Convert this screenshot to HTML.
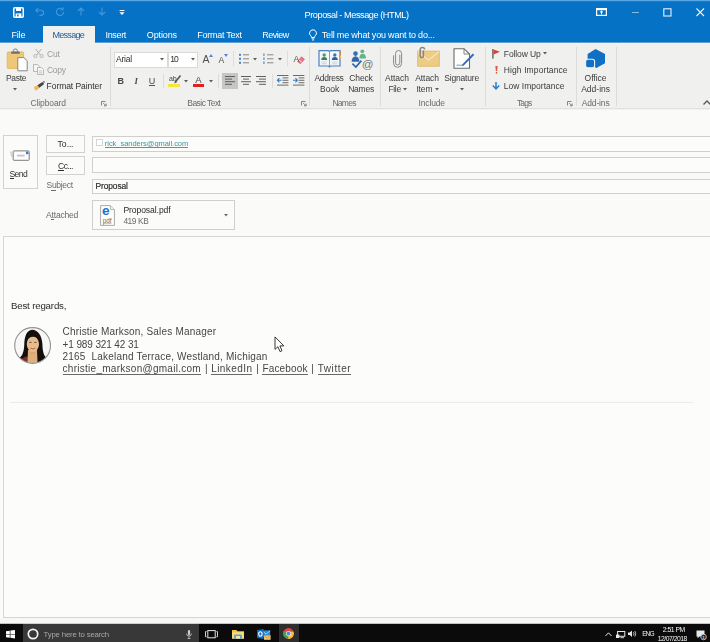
<!DOCTYPE html>
<html lang="en"><head><meta charset="utf-8"><title>Proposal - Message (HTML)</title>
<style>
html,body{margin:0;padding:0;background:#fbfcfa;}
#root{position:relative;width:710px;height:642px;overflow:hidden;background:#fbfcfa;font-family:"Liberation Sans",sans-serif;}
#layer{position:absolute;left:0;top:0;width:710px;height:642px;will-change:transform;}
.t{position:absolute;white-space:pre;line-height:1;}
.b{position:absolute;box-sizing:border-box;overflow:visible;}
u{text-decoration:underline;}
</style></head>
<body><div id="root">
<div class="b" style="left:0px;top:0px;width:710px;height:43px;background:#0672c6;"></div>
<div class="b" style="left:0px;top:0px;width:710px;height:1px;background:#57a6e6;"></div>
<div class="b" style="left:0px;top:1px;width:710px;height:1px;background:#1a7ccd;"></div>
<div class="b" style="left:0px;top:42px;width:710px;height:1px;background:#5c9fd8;"></div>
<div class="b" style="left:43px;top:26px;width:52px;height:18px;background:#f0f1ef;"></div>
<svg class="b" style="left:13px;top:7px" width="11" height="11" viewBox="0 0 11 11"><rect x="0.75" y="0.75" width="9.5" height="9.5" rx="1" fill="none" stroke="#fff" stroke-width="1.5"/><rect x="3" y="1" width="5" height="3" fill="#fff"/><rect x="2.6" y="6.4" width="5.8" height="3.6" fill="#fff"/><rect x="4.2" y="7.4" width="1.4" height="2" fill="#0672c6"/></svg>
<svg class="b" style="left:35px;top:7px" width="10" height="9" viewBox="0 0 10 9"><path d="M1 3.2 H6 a2.6 2.6 0 0 1 0 5.2 H4.5" fill="none" stroke="#4497dc" stroke-width="1.1"/><path d="M3.2 0.8 L0.8 3.2 L3.2 5.6" fill="none" stroke="#4497dc" stroke-width="1.1"/></svg>
<svg class="b" style="left:55px;top:7px" width="10" height="9" viewBox="0 0 10 9"><path d="M7.6 2.4 A3.6 3.6 0 1 0 8.6 5" fill="none" stroke="#4497dc" stroke-width="1.1"/><path d="M5.4 2.8 H8.2 V0.2" fill="none" stroke="#4497dc" stroke-width="1"/></svg>
<svg class="b" style="left:77px;top:7px" width="8" height="9" viewBox="0 0 8 9"><path d="M4 1 V8.5 M1 4 L4 1 L7 4" fill="none" stroke="#4497dc" stroke-width="1.1"/></svg>
<svg class="b" style="left:98px;top:7px" width="8" height="9" viewBox="0 0 8 9"><path d="M4 0.5 V8 M1 5 L4 8 L7 5" fill="none" stroke="#4497dc" stroke-width="1.1"/></svg>
<svg class="b" style="left:119px;top:9.5px" width="6" height="6" viewBox="0 0 6 6"><rect x="0.6" y="0" width="4.8" height="1" fill="#fff"/><path d="M0.4 2.2 H5.6 L3 5 Z" fill="#fff"/></svg>
<svg class="b" style="left:596px;top:8px" width="11" height="8" viewBox="0 0 11 8"><rect x="0.6" y="0.6" width="9.8" height="6.8" fill="none" stroke="#fff" stroke-width="1.2"/><rect x="0.6" y="0.6" width="9.8" height="1.6" fill="#fff"/><path d="M5.5 3 V6.4 M4 4.4 L5.5 3 L7 4.4" stroke="#fff" stroke-width="1" fill="none"/></svg>
<div class="b" style="left:631.5px;top:11.5px;width:7px;height:1px;background:#86bde8;"></div>
<svg class="b" style="left:663px;top:7.5px" width="9" height="9" viewBox="0 0 9 9"><rect x="0.8" y="0.8" width="7.2" height="7.2" fill="none" stroke="#e8f2fb" stroke-width="1.1"/></svg>
<svg class="b" style="left:696px;top:8px" width="9" height="9" viewBox="0 0 9 9"><path d="M0.5 0.5 L8 8 M8 0.5 L0.5 8" stroke="#e8f2fb" stroke-width="1.1" fill="none"/></svg>
<svg class="b" style="left:308px;top:29px" width="10" height="12" viewBox="0 0 10 12"><path d="M5 0.8 a3.4 3.4 0 0 1 2.1 6.1 c-0.5 0.5 -0.6 0.9 -0.6 1.6 H3.5 c0 -0.7 -0.1 -1.1 -0.6 -1.6 A3.4 3.4 0 0 1 5 0.8 Z" fill="none" stroke="#fff" stroke-width="1"/><path d="M3.6 9.8 H6.4 M4 11 H6" stroke="#fff" stroke-width="0.9"/></svg>
<div class="b" style="left:0px;top:43px;width:710px;height:65px;background:#f0f1ef;"></div>
<div class="b" style="left:0px;top:43px;width:710px;height:1px;background:#f4f5f3;"></div>
<div class="b" style="left:0px;top:108px;width:710px;height:1px;background:#e0e1df;"></div>
<div class="b" style="left:0px;top:109px;width:710px;height:1px;background:#f2f3f1;"></div>
<div class="b" style="left:43px;top:26px;width:52px;height:18px;background:#f0f1ef;"></div>
<div class="b" style="left:110px;top:47px;width:1px;height:59px;background:#dcdddb;"></div>
<div class="b" style="left:309px;top:47px;width:1px;height:59px;background:#dcdddb;"></div>
<div class="b" style="left:379.5px;top:47px;width:1px;height:59px;background:#dcdddb;"></div>
<div class="b" style="left:484.5px;top:47px;width:1px;height:59px;background:#dcdddb;"></div>
<div class="b" style="left:575.5px;top:47px;width:1px;height:59px;background:#dcdddb;"></div>
<div class="b" style="left:616px;top:47px;width:1px;height:59px;background:#dcdddb;"></div>
<svg class="b" style="left:6px;top:48.6px" width="23" height="23" viewBox="0 0 23 23"><rect x="1.2" y="3" width="16.4" height="16.4" rx="1" fill="#eec878" stroke="#e6b862" stroke-width="1"/><path d="M7.4 2.6 V1.6 a2 1.6 0 0 1 4 0 V2.6" fill="none" stroke="#7a7a7a" stroke-width="1"/><rect x="5.2" y="2.4" width="8.6" height="2.4" rx="0.6" fill="#6f6f6f"/><path d="M11.8 8.6 H17.8 L21.2 11.8 V21.8 H11.8 Z" fill="#fff" stroke="#858585" stroke-width="1"/></svg>
<svg class="b" style="left:13.3px;top:88px" width="4" height="3" viewBox="0 0 4 3"><path d="M0 0 H4 L2 2.4 Z" fill="#5a5a5a"/></svg>
<svg class="b" style="left:33px;top:49px" width="11" height="9" viewBox="0 0 11 9"><path d="M2.6 0 L7.4 6 M8.4 0 L3.6 6" stroke="#b0b0b0" stroke-width="1" fill="none"/><circle cx="2.4" cy="7" r="1.6" fill="none" stroke="#b0b0b0" stroke-width="0.9"/><circle cx="8.6" cy="7" r="1.6" fill="none" stroke="#b0b0b0" stroke-width="0.9"/></svg>
<svg class="b" style="left:33px;top:64px" width="11" height="11" viewBox="0 0 11 11"><path d="M0.5 0.5 H4.5 L6.5 2.5 V7.5 H0.5 Z" fill="#f6f6f6" stroke="#b0b0b0" stroke-width="0.9"/><path d="M4.5 3.5 H8.5 L10.5 5.5 V10.5 H4.5 Z" fill="#f6f6f6" stroke="#b0b0b0" stroke-width="0.9"/><path d="M6 7 H9 M6 8.8 H9" stroke="#b0b0b0" stroke-width="0.7"/></svg>
<svg class="b" style="left:33px;top:80.5px" width="12" height="10" viewBox="0 0 12 10"><path d="M1 5.8 L4.6 4.4 L6.4 6.8 L3.6 9.6 L1.6 8.8 Z" fill="#efba5c"/><path d="M4.4 4.3 L9.4 0.9 L11.2 3.1 L6.4 6.7 Z" fill="#454545"/><circle cx="10.9" cy="0.9" r="0.8" fill="#454545"/></svg>
<svg class="b" style="left:101.2px;top:101px" width="6" height="5" viewBox="0 0 6 5"><path d="M0.5 4.5 V0.5 H4.5" fill="none" stroke="#777" stroke-width="0.9"/><path d="M2.2 2.2 L5 4.6 M5.2 2.6 V4.8 H3" fill="none" stroke="#777" stroke-width="0.9"/></svg>
<div class="b" style="left:113.5px;top:51.5px;width:54px;height:16px;background:#fff;border:1px solid #d9dad8;"></div>
<div class="b" style="left:167.5px;top:51.5px;width:30px;height:16px;background:#fff;border:1px solid #d9dad8;"></div>
<svg class="b" style="left:160px;top:57.6px" width="4" height="3" viewBox="0 0 4 3"><path d="M0 0 H4 L2 2.4 Z" fill="#5a5a5a"/></svg>
<svg class="b" style="left:190.5px;top:57.6px" width="4" height="3" viewBox="0 0 4 3"><path d="M0 0 H4 L2 2.4 Z" fill="#5a5a5a"/></svg>
<svg class="b" style="left:208.6px;top:53.6px" width="4" height="3" viewBox="0 0 4 3"><path d="M0 3 L2 0 L4 3 Z" fill="#4a8ad0"/></svg>
<svg class="b" style="left:224px;top:54.4px" width="4" height="3" viewBox="0 0 4 3"><path d="M0 0 L2 3 L4 0 Z" fill="#4a8ad0"/></svg>
<div class="b" style="left:232.5px;top:51px;width:1px;height:15px;background:#dcdddb;"></div>
<svg class="b" style="left:238.5px;top:53px" width="10" height="11" viewBox="0 0 10 11"><rect x="0" y="0.8" width="2" height="2" fill="#4484cc"/><rect x="4" y="1.3" width="6" height="1" fill="#858585"/><rect x="0" y="4.8" width="2" height="2" fill="#4484cc"/><rect x="4" y="5.3" width="6" height="1" fill="#858585"/><rect x="0" y="8.8" width="2" height="2" fill="#4484cc"/><rect x="4" y="9.3" width="6" height="1" fill="#858585"/></svg>
<svg class="b" style="left:253.3px;top:57.6px" width="4" height="3" viewBox="0 0 4 3"><path d="M0 0 H4 L2 2.4 Z" fill="#5a5a5a"/></svg>
<svg class="b" style="left:262.5px;top:53px" width="11" height="11" viewBox="0 0 11 11"><rect x="0.4" y="0.4" width="1.1" height="2.6" fill="#4484cc"/><rect x="4" y="1.3" width="6.4" height="1" fill="#858585"/><rect x="0.4" y="4.4" width="1.1" height="2.6" fill="#4484cc"/><rect x="4" y="5.3" width="6.4" height="1" fill="#858585"/><rect x="0.4" y="8.4" width="1.1" height="2.6" fill="#4484cc"/><rect x="4" y="9.3" width="6.4" height="1" fill="#858585"/></svg>
<svg class="b" style="left:277.5px;top:57.6px" width="4" height="3" viewBox="0 0 4 3"><path d="M0 0 H4 L2 2.4 Z" fill="#5a5a5a"/></svg>
<div class="b" style="left:287px;top:51px;width:1px;height:15px;background:#dcdddb;"></div>
<svg class="b" style="left:297px;top:56px" width="8" height="8" viewBox="0 0 8 8"><path d="M0.5 5.5 L4.5 0.8 L7.5 3.2 L3.5 7.8 Z" fill="#e8758f" stroke="#d4506f" stroke-width="0.6"/><path d="M2 4 L5 6.4" stroke="#fff" stroke-width="0.7"/></svg>
<div class="b" style="left:148.6px;top:85px;width:6.8px;height:1px;background:#555;"></div>
<div class="b" style="left:163.3px;top:74px;width:1px;height:14px;background:#dcdddb;"></div>
<svg class="b" style="left:173px;top:74.5px" width="8" height="9" viewBox="0 0 8 9"><path d="M7.5 0.5 L2 7.5" stroke="#555" stroke-width="1.6"/><path d="M2.6 6.2 L1 8.6 L3.8 7.4 Z" fill="#555"/></svg>
<div class="b" style="left:168.4px;top:83.6px;width:11.8px;height:3.6px;background:#f5e63c;"></div>
<svg class="b" style="left:184px;top:79.6px" width="4" height="3" viewBox="0 0 4 3"><path d="M0 0 H4 L2 2.4 Z" fill="#5a5a5a"/></svg>
<div class="b" style="left:193.2px;top:83.8px;width:11.2px;height:3.2px;background:#e0211c;"></div>
<svg class="b" style="left:208.6px;top:79.6px" width="4" height="3" viewBox="0 0 4 3"><path d="M0 0 H4 L2 2.4 Z" fill="#5a5a5a"/></svg>
<div class="b" style="left:217.6px;top:74px;width:1px;height:14px;background:#dcdddb;"></div>
<div class="b" style="left:221.5px;top:73px;width:16px;height:16px;background:#c6c7c5;"></div>
<svg class="b" style="left:224.5px;top:76px" width="10" height="10" viewBox="0 0 10 10"><rect x="0" y="0.0" width="10" height="1" fill="#5f5f5f"/><rect x="0" y="2.6" width="7" height="1" fill="#5f5f5f"/><rect x="0" y="5.2" width="10" height="1" fill="#5f5f5f"/><rect x="0" y="7.800000000000001" width="7" height="1" fill="#5f5f5f"/></svg>
<svg class="b" style="left:240.5px;top:76px" width="10" height="10" viewBox="0 0 10 10"><rect x="0.0" y="0.0" width="10" height="1" fill="#5f5f5f"/><rect x="2.0" y="2.6" width="6" height="1" fill="#5f5f5f"/><rect x="0.0" y="5.2" width="10" height="1" fill="#5f5f5f"/><rect x="2.0" y="7.800000000000001" width="6" height="1" fill="#5f5f5f"/></svg>
<svg class="b" style="left:256px;top:76px" width="10" height="10" viewBox="0 0 10 10"><rect x="0" y="0.0" width="10" height="1" fill="#5f5f5f"/><rect x="3" y="2.6" width="7" height="1" fill="#5f5f5f"/><rect x="0" y="5.2" width="10" height="1" fill="#5f5f5f"/><rect x="3" y="7.800000000000001" width="7" height="1" fill="#5f5f5f"/></svg>
<div class="b" style="left:271.6px;top:74px;width:1px;height:14px;background:#dcdddb;"></div>
<svg class="b" style="left:277px;top:75px" width="12" height="11" viewBox="0 0 12 11"><rect x="0" y="0" width="11.4" height="1" fill="#6a6a6a"/><rect x="0" y="9.6" width="11.4" height="1" fill="#6a6a6a"/><rect x="5.6" y="2.4" width="5.8" height="1" fill="#6a6a6a"/><rect x="5.6" y="4.8" width="5.8" height="1" fill="#6a6a6a"/><rect x="5.6" y="7.2" width="5.8" height="1" fill="#6a6a6a"/><path d="M0.4 5.3 H4.6 M2.4 3.2 L0.4 5.3 L2.4 7.4" stroke="#2b7cd3" stroke-width="1.1" fill="none"/></svg>
<svg class="b" style="left:293px;top:75px" width="12" height="11" viewBox="0 0 12 11"><rect x="0" y="0" width="11.4" height="1" fill="#6a6a6a"/><rect x="0" y="9.6" width="11.4" height="1" fill="#6a6a6a"/><rect x="5.6" y="2.4" width="5.8" height="1" fill="#6a6a6a"/><rect x="5.6" y="4.8" width="5.8" height="1" fill="#6a6a6a"/><rect x="5.6" y="7.2" width="5.8" height="1" fill="#6a6a6a"/><path d="M0 5.3 H4.2 M2.4 3.2 L4.4 5.3 L2.4 7.4" stroke="#2b7cd3" stroke-width="1.1" fill="none"/></svg>
<svg class="b" style="left:300.8px;top:101px" width="6" height="5" viewBox="0 0 6 5"><path d="M0.5 4.5 V0.5 H4.5" fill="none" stroke="#777" stroke-width="0.9"/><path d="M2.2 2.2 L5 4.6 M5.2 2.6 V4.8 H3" fill="none" stroke="#777" stroke-width="0.9"/></svg>
<svg class="b" style="left:317.5px;top:49px" width="23" height="19" viewBox="0 0 23 19"><path d="M1 1.6 H10.5 L11.5 2.6 L12.5 1.6 H22 V17 H12.5 L11.5 18 L10.5 17 H1 Z" fill="#f4f7fa" stroke="#4b7fbc" stroke-width="1.2"/><path d="M11.5 2.6 V17.6" stroke="#6f9acb" stroke-width="0.9"/><circle cx="6.2" cy="6" r="1.7" fill="#4a9a6c"/><path d="M3.2 11 a3 3 0 0 1 6 0 Z" fill="#3d7f5c"/><circle cx="16.8" cy="6" r="1.7" fill="#3f74b0"/><path d="M13.8 11 a3 3 0 0 1 6 0 Z" fill="#315f96"/><path d="M3.6 13 H8.8 M3.6 14.8 H8.8 M14.2 13 H19.4 M14.2 14.8 H19.4" stroke="#b9c2cb" stroke-width="0.7"/><rect x="22" y="2.6" width="1" height="3" fill="#e0774a"/><rect x="22" y="6.6" width="1" height="3" fill="#e0c05a"/></svg>
<svg class="b" style="left:351px;top:49px" width="23" height="22" viewBox="0 0 23 22"><circle cx="11.3" cy="2.3" r="1.9" fill="#62b48a"/><path d="M8.4 9.6 a3.3 4.8 0 0 1 6.6 0 Z" fill="#62b48a"/><circle cx="4.5" cy="4.6" r="2.3" fill="#336fae"/><path d="M0.6 12.8 a3.9 5.6 0 0 1 7.8 0 Z" fill="#2f68a8"/><path d="M1.4 14.6 L4.9 18 L10.4 11.6" stroke="#2f68a8" stroke-width="1.7" fill="none"/><circle cx="16.7" cy="15" r="5.6" fill="#f0f1ef"/><text x="16.7" y="18.7" font-size="11.6" text-anchor="middle" fill="#747474" font-family="Liberation Sans, sans-serif">@</text></svg>
<svg class="b" style="left:393px;top:49px" width="9" height="19" viewBox="0 0 9 19"><path d="M6.6 5.5 V13.6 a2.1 2.1 0 0 1 -4.2 0 V4.2 a3 3 0 0 1 6 0 V14 a4 4 0 0 1 -8 0 V6" transform="translate(0.2,0.3)" fill="none" stroke="#8a8a8a" stroke-width="1"/></svg>
<svg class="b" style="left:402.9px;top:88px" width="4" height="3" viewBox="0 0 4 3"><path d="M0 0 H4 L2 2.4 Z" fill="#5a5a5a"/></svg>
<svg class="b" style="left:416.5px;top:46.6px" width="23" height="20" viewBox="0 0 23 20"><rect x="0.7" y="4.2" width="21.6" height="15" fill="#edcc86" stroke="#e4bb6c" stroke-width="1"/><path d="M1 4.8 L11.5 13 L22 4.8" fill="none" stroke="#f6e6bd" stroke-width="1.2"/><path d="M6.4 3.6 V9 a1.6 1.6 0 0 1 -3.2 0 V2.6 a2.2 2.2 0 0 1 4.4 0" fill="none" stroke="#858585" stroke-width="1.5"/></svg>
<svg class="b" style="left:434.9px;top:88px" width="4" height="3" viewBox="0 0 4 3"><path d="M0 0 H4 L2 2.4 Z" fill="#5a5a5a"/></svg>
<svg class="b" style="left:453px;top:48px" width="22" height="21" viewBox="0 0 22 21"><path d="M1 0.7 H11 L16.5 6 V20.3 H1 Z" fill="#fff" stroke="#6a6a6a" stroke-width="1.1"/><path d="M11 0.7 V6 H16.5" fill="none" stroke="#777" stroke-width="0.9"/><path d="M19.8 5.6 L21.2 6.9 L10.8 17.4 L8.8 18.2 L9.5 16.2 Z" fill="#3769ad"/><path d="M3.4 17.2 H9" stroke="#4a7fc4" stroke-width="0.8"/></svg>
<svg class="b" style="left:460px;top:88px" width="4" height="3" viewBox="0 0 4 3"><path d="M0 0 H4 L2 2.4 Z" fill="#5a5a5a"/></svg>
<svg class="b" style="left:492px;top:48.5px" width="9" height="10" viewBox="0 0 9 10"><rect x="0.3" y="0" width="1.2" height="9.6" fill="#4a4a4a"/><path d="M1.5 0.4 L8 2.8 L1.5 5.6 Z" fill="#d8452b"/></svg>
<svg class="b" style="left:543.3px;top:52px" width="4" height="3" viewBox="0 0 4 3"><path d="M0 0 H4 L2 2.4 Z" fill="#5a5a5a"/></svg>
<svg class="b" style="left:494.6px;top:66px" width="3" height="8" viewBox="0 0 3 8"><path d="M0.3 0 H2.7 L2.1 5 H0.9 Z" fill="#e2553a"/><rect x="0.8" y="6" width="1.4" height="1.6" fill="#e2553a"/></svg>
<svg class="b" style="left:492.4px;top:82.2px" width="8" height="8" viewBox="0 0 8 8"><path d="M4 0 V6.6 M0.8 3.6 L4 7 L7.2 3.6" fill="none" stroke="#2b7cd3" stroke-width="1.5"/></svg>
<svg class="b" style="left:567.4px;top:101px" width="6" height="5" viewBox="0 0 6 5"><path d="M0.5 4.5 V0.5 H4.5" fill="none" stroke="#777" stroke-width="0.9"/><path d="M2.2 2.2 L5 4.6 M5.2 2.6 V4.8 H3" fill="none" stroke="#777" stroke-width="0.9"/></svg>
<svg class="b" style="left:585px;top:49px" width="21" height="19" viewBox="0 0 21 19"><path d="M10.6 0.1 L20 5.1 V14.2 L11.4 18.9 L2.6 14 V5 Z" fill="#1070c4"/><rect x="0.6" y="10.2" width="9" height="8.6" rx="2.2" fill="#1070c4" stroke="#f0f1ef" stroke-width="1.1"/></svg>
<svg class="b" style="left:702.6px;top:100.2px" width="8" height="5" viewBox="0 0 8 5"><path d="M0.5 4.5 L4 1 L7.5 4.5" fill="none" stroke="#5a5a5a" stroke-width="1.4"/></svg>
<div class="b" style="left:0px;top:110px;width:710px;height:127px;background:#fafbf9;"></div>
<div class="b" style="left:3px;top:135px;width:35px;height:54px;background:#fbfcfa;border:1px solid #d2d3d1;"></div>
<svg class="b" style="left:10px;top:150px" width="20" height="11" viewBox="0 0 20 11"><rect x="3.2" y="0.9" width="16" height="9.4" rx="0.8" fill="#fdfdfd" stroke="#7c7c7c" stroke-width="1"/><path d="M7 5.6 H14.6" stroke="#c4c4c4" stroke-width="1.8"/><rect x="16" y="1.6" width="2.4" height="2.6" fill="#2b7cd3"/><path d="M0.2 2.2 H1.6 M0.6 4 H2 M1 5.8 H2.4" stroke="#8a8a8a" stroke-width="0.7"/></svg>
<div class="b" style="left:9.6px;top:178.2px;width:4.6px;height:0.9px;background:#2f2f2f;"></div>
<div class="b" style="left:45.5px;top:135px;width:39px;height:18px;background:#fbfcfa;border:1px solid #d2d3d1;"></div>
<div class="b" style="left:45.5px;top:156.4px;width:39px;height:18.4px;background:#fbfcfa;border:1px solid #d2d3d1;"></div>
<div class="b" style="left:58.4px;top:170.2px;width:5.2px;height:0.9px;background:#2f2f2f;"></div>
<div class="b" style="left:51.2px;top:189.6px;width:4.4px;height:0.8px;background:#6a6a6a;"></div>
<div class="b" style="left:51.4px;top:218.7px;width:2.6px;height:0.8px;background:#6a6a6a;"></div>
<div class="b" style="left:92px;top:136px;width:622px;height:16px;background:#fcfdfb;border:1px solid #cfd0ce;"></div>
<div class="b" style="left:92px;top:157px;width:622px;height:16px;background:#fcfdfb;border:1px solid #cfd0ce;"></div>
<div class="b" style="left:92px;top:179px;width:622px;height:15px;background:#fcfdfb;border:1px solid #cfd0ce;"></div>
<div class="b" style="left:96px;top:139.4px;width:6.8px;height:6.8px;background:#fff;border:1px solid #d6d6d6;"></div>
<div class="b" style="left:104.8px;top:147.2px;width:83.4px;height:0.8px;background:#4a9ba5;"></div>
<div class="b" style="left:92px;top:200px;width:142.6px;height:30px;background:#fbfcfa;border:1px solid #cfd0ce;"></div>
<svg class="b" style="left:100px;top:205px" width="15" height="21" viewBox="0 0 15 21"><path d="M0.6 0.6 H10.4 L14.4 4.6 V20.4 H0.6 Z" fill="#fff" stroke="#a9a9a9" stroke-width="1"/><path d="M10.4 0.6 V4.6 H14.4" fill="#ececec" stroke="#a9a9a9" stroke-width="0.8"/><text x="5.9" y="10.4" font-size="13.6" font-weight="bold" text-anchor="middle" fill="#1976d2" font-family="Liberation Sans, sans-serif">e</text><text x="7.2" y="17.6" font-size="6.4" text-anchor="middle" fill="#6a6a6a" font-family="Liberation Sans, sans-serif">pdf</text><path d="M3 18.6 H11.6" stroke="#9a9a9a" stroke-width="0.6"/></svg>
<svg class="b" style="left:223.6px;top:213.8px" width="4" height="3" viewBox="0 0 4 3"><path d="M0 0 H4 L2 2.4 Z" fill="#6a6a6a"/></svg>
<div class="b" style="left:3px;top:236px;width:712px;height:382px;background:#fcfdfb;border:1px solid #d6d7d5;"></div>
<svg class="b" style="left:14px;top:326.6px" width="37" height="37" viewBox="0 0 37 37"><defs><clipPath id="avc"><circle cx="18.6" cy="18.5" r="17.6"/></clipPath><filter id="avb" x="-10%" y="-10%" width="120%" height="120%"><feGaussianBlur stdDeviation="0.45"/></filter></defs><circle cx="18.6" cy="18.5" r="17.8" fill="#f7f8f6"/><g clip-path="url(#avc)"><g filter="url(#avb)"><path d="M18.1 2.7 C12.4 3.3 10.6 9.6 10.3 17 C10.1 23 9 28 6 30.6 L3.6 37 H33.6 L32.4 30.6 C29 28 28.6 22.4 28.4 17 C28 9 24.2 3 18.1 2.7 Z" fill="#17100e"/><path d="M5.4 37 C6 32.4 9 30.4 13.6 29.6 L14.2 37 Z" fill="#7a3328"/><path d="M14 23 H23 L23.6 37 H13.4 Z" fill="#dfb07e"/><ellipse cx="18.9" cy="17" rx="6.1" ry="7.9" fill="#e6bd8c"/><path d="M12.8 13.6 C13 8.6 16 7.2 19.4 7.4 C23.4 7.8 25.2 10.4 25 14.6 C24 11.2 22 9.7 19.2 9.7 C16 9.7 14.2 10.8 12.8 13.6 Z" fill="#17100e"/><path d="M16.4 21 Q18.9 23 21.4 21" stroke="#b8604e" stroke-width="1" fill="none"/><path d="M15.2 15.4 H17.6 M20.2 15.4 H22.6" stroke="#6a4a3a" stroke-width="0.9"/><path d="M16.6 25.6 Q18.6 27.6 21 25.4" stroke="#c89868" stroke-width="0.8" fill="none"/></g></g><circle cx="18.6" cy="18.5" r="17.9" fill="none" stroke="#929292" stroke-width="1.1"/></svg>
<div class="b" style="left:62.6px;top:374.1px;width:138.3px;height:0.8px;background:#686868;"></div>
<div class="b" style="left:211.2px;top:374.1px;width:41.20000000000002px;height:0.8px;background:#686868;"></div>
<div class="b" style="left:262.4px;top:374.1px;width:45.200000000000045px;height:0.8px;background:#686868;"></div>
<div class="b" style="left:317.7px;top:374.1px;width:33.5px;height:0.8px;background:#686868;"></div>
<div class="b" style="left:10px;top:402px;width:682.5px;height:1px;background:#ecedeb;"></div>
<svg class="b" style="left:273.6px;top:336.4px" width="12" height="17" viewBox="0 0 12 17"><path d="M1 0.9 V13.4 L3.9 10.7 L6 15.6 L8 14.7 L5.9 9.9 H9.9 Z" fill="#fff" stroke="#222" stroke-width="0.9" stroke-linejoin="round"/></svg>
<div class="b" style="left:0px;top:618px;width:710px;height:5px;background:#f7f8f6;"></div>
<div class="b" style="left:0px;top:623px;width:710px;height:1px;background:#c4c5c3;"></div>
<div class="b" style="left:0px;top:624px;width:710px;height:18px;background:#0b0b0b;"></div>
<div class="b" style="left:23px;top:624px;width:175.6px;height:18px;background:#383838;"></div>
<div class="b" style="left:23px;top:623px;width:175.6px;height:1px;background:#cfd0ce;"></div>
<svg class="b" style="left:6.3px;top:630px" width="9" height="8.4" viewBox="0 0 9 8.4"><path d="M0 1.2 L3.8 0.7 V4 H0 Z M4.4 0.6 L9 0 V4 H4.4 Z M0 4.5 H3.8 V7.8 L0 7.3 Z M4.4 4.5 H9 V8.4 L4.4 7.8 Z" fill="#fff"/></svg>
<svg class="b" style="left:27px;top:628.4px" width="12" height="12" viewBox="0 0 12 12"><circle cx="6" cy="6" r="4.7" fill="none" stroke="#f2f2f2" stroke-width="1.7"/></svg>
<svg class="b" style="left:185.6px;top:630px" width="6" height="9" viewBox="0 0 6 9"><rect x="1.9" y="0" width="2.2" height="5" rx="1.1" fill="#cfcfcf"/><path d="M0.6 3.6 a2.4 2.4 0 0 0 4.8 0 M3 6 V8.4 M1.6 8.5 H4.4" stroke="#cfcfcf" stroke-width="0.8" fill="none"/></svg>
<svg class="b" style="left:205px;top:630px" width="13" height="8.4" viewBox="0 0 13 8.4"><rect x="2.8" y="0.6" width="7.4" height="7.2" fill="none" stroke="#e6e6e6" stroke-width="1"/><path d="M1.6 1.6 H0.5 V6.8 H1.6 M11.4 1.6 H12.5 V6.8 H11.4" fill="none" stroke="#e6e6e6" stroke-width="0.9"/></svg>
<svg class="b" style="left:232px;top:629px" width="12" height="10" viewBox="0 0 12 10"><path d="M0 1 H4.4 L5.4 2.2 H12 V9.6 H0 Z" fill="#f2c64b"/><rect x="0" y="3.2" width="12" height="6.4" fill="#f7da7a"/><rect x="2.2" y="5.6" width="7.6" height="4" fill="#4aa3e0"/><rect x="4" y="7" width="4" height="2.6" fill="#f7e7a8"/></svg>
<svg class="b" style="left:256.5px;top:628.6px" width="14" height="11" viewBox="0 0 14 11"><rect x="5.2" y="1.4" width="8" height="7" fill="#2a8ad4"/><path d="M5.2 1.8 L9.2 5 L13.2 1.8" fill="none" stroke="#bfe0f7" stroke-width="0.8"/><path d="M0 1 L6.6 0 V10 L0 9 Z" fill="#0f6cbd"/><ellipse cx="3.4" cy="5" rx="1.7" ry="2.2" fill="none" stroke="#fff" stroke-width="1.1"/><rect x="7" y="6.4" width="6.6" height="4.4" fill="#f0c26a"/><path d="M7 6.6 L10.3 9 L13.6 6.6" fill="none" stroke="#c9923a" stroke-width="0.7"/></svg>
<div class="b" style="left:278.6px;top:624px;width:20.2px;height:18px;background:#2e2e2e;"></div>
<svg class="b" style="left:283.2px;top:628.4px" width="11" height="11" viewBox="0 0 11 11"><circle cx="5.5" cy="5.5" r="5.4" fill="#e2453a"/><path d="M5.5 5.5 L0.85 2.8 A5.4 5.4 0 0 0 5.2 10.9 L7.9 6.6 Z" fill="#39a455"/><path d="M5.5 5.5 L5.2 10.9 A5.4 5.4 0 0 0 10.6 3.7 L5.5 3.7 Z" fill="#f4c534"/><circle cx="5.5" cy="5.5" r="2.5" fill="#f3f3f3"/><circle cx="5.5" cy="5.5" r="1.9" fill="#4a8af0"/></svg>
<svg class="b" style="left:604.6px;top:631.6px" width="7" height="4.4" viewBox="0 0 7 4.4"><path d="M0.5 4 L3.5 0.8 L6.5 4" fill="none" stroke="#e4e4e4" stroke-width="1"/></svg>
<svg class="b" style="left:616px;top:630.6px" width="9.4" height="7.4" viewBox="0 0 9.4 7.4"><rect x="1.6" y="0.5" width="7.2" height="4.8" fill="none" stroke="#e8e8e8" stroke-width="1"/><rect x="0" y="3.6" width="3.4" height="3.4" fill="#e8e8e8"/><path d="M4.4 6.7 H8" stroke="#e8e8e8" stroke-width="0.9"/></svg>
<svg class="b" style="left:628px;top:630.4px" width="9.4" height="7.6" viewBox="0 0 9.4 7.6"><path d="M0 2.6 H1.8 L4 0.6 V7 L1.8 5 H0 Z" fill="#e8e8e8"/><path d="M5.4 2.2 Q6.6 3.8 5.4 5.4 M6.8 1 Q8.8 3.8 6.8 6.6" fill="none" stroke="#e8e8e8" stroke-width="0.8"/></svg>
<svg class="b" style="left:696px;top:629.8px" width="11" height="10" viewBox="0 0 11 10"><path d="M0.5 0.5 H8.5 V6.4 H3.6 L1.6 8.2 V6.4 H0.5 Z" fill="#e8e8e8"/><circle cx="7.6" cy="7" r="2.8" fill="#2b2b2b" stroke="#e8e8e8" stroke-width="0.7"/><text x="7.6" y="8.7" font-size="4.4" text-anchor="middle" fill="#fff" font-family="Liberation Sans, sans-serif">1</text></svg>
<div id="layer">
<span class="t" style="left:304.60px;top:10px;font-size:9.2px;line-height:10px;color:#ffffff;letter-spacing:-0.454px;">Proposal - Message (HTML)</span>
<span class="t" style="left:11.50px;top:30px;font-size:9.0px;line-height:10px;color:#ffffff;letter-spacing:-0.201px;">File</span>
<span class="t" style="left:52.50px;top:30px;font-size:9.0px;line-height:10px;color:#1b5a9e;letter-spacing:-0.717px;">Message</span>
<span class="t" style="left:105.50px;top:30px;font-size:9.0px;line-height:10px;color:#ffffff;letter-spacing:-0.335px;">Insert</span>
<span class="t" style="left:146.80px;top:30px;font-size:9.0px;line-height:10px;color:#ffffff;letter-spacing:-0.117px;">Options</span>
<span class="t" style="left:197.30px;top:30px;font-size:9.0px;line-height:10px;color:#ffffff;letter-spacing:-0.259px;">Format Text</span>
<span class="t" style="left:262.30px;top:30px;font-size:9.0px;line-height:10px;color:#ffffff;letter-spacing:-0.502px;">Review</span>
<span class="t" style="left:321.80px;top:30px;font-size:9.0px;line-height:10px;color:#ffffff;letter-spacing:-0.189px;">Tell me what you want to do...</span>
<span class="t" style="left:6.00px;top:73px;font-size:8.5px;line-height:10px;color:#3b3b3b;letter-spacing:-0.307px;">Paste</span>
<span class="t" style="left:47.00px;top:49px;font-size:8.5px;line-height:10px;color:#9b9b9b;letter-spacing:-0.242px;">Cut</span>
<span class="t" style="left:47.00px;top:65px;font-size:8.5px;line-height:10px;color:#9b9b9b;letter-spacing:-0.311px;">Copy</span>
<span class="t" style="left:46.60px;top:81px;font-size:8.5px;line-height:10px;color:#2f2f2f;letter-spacing:-0.065px;">Format Painter</span>
<span class="t" style="left:30.40px;top:98px;font-size:8.5px;line-height:10px;color:#6a6a6a;letter-spacing:-0.098px;">Clipboard</span>
<span class="t" style="left:116.00px;top:54px;font-size:8.5px;line-height:10px;color:#2f2f2f;letter-spacing:-0.201px;">Arial</span>
<span class="t" style="left:170.20px;top:54px;font-size:8.5px;line-height:10px;color:#2f2f2f;letter-spacing:-0.827px;">10</span>
<span class="t" style="left:202.40px;top:53px;font-size:10.5px;line-height:12px;color:#505050;letter-spacing:0.397px;">A</span>
<span class="t" style="left:218.60px;top:55px;font-size:8.6px;line-height:10px;color:#505050;letter-spacing:0.464px;">A</span>
<span class="t" style="left:293.60px;top:54px;font-size:8.8px;line-height:10px;color:#555;letter-spacing:0.130px;">A</span>
<span class="t" style="left:117.60px;top:76px;font-size:9px;line-height:10px;color:#484848;letter-spacing:-0.700px;font-weight:bold;">B</span>
<span class="t" style="left:134.40px;top:76px;font-size:8.6px;line-height:10px;color:#484848;letter-spacing:0.811px;font-weight:bold;font-style:italic;font-family:'Liberation Serif',serif;">I</span>
<span class="t" style="left:148.80px;top:76px;font-size:9px;line-height:10px;color:#484848;letter-spacing:-0.100px;">U</span>
<span class="t" style="left:169.00px;top:75px;font-size:7px;line-height:7px;color:#444;letter-spacing:-0.143px;">ab</span>
<span class="t" style="left:195.20px;top:74px;font-size:9.6px;line-height:11px;color:#444;letter-spacing:1.597px;">A</span>
<span class="t" style="left:187.30px;top:98px;font-size:8.5px;line-height:10px;color:#6a6a6a;letter-spacing:-0.548px;">Basic Text</span>
<span class="t" style="left:314.40px;top:73px;font-size:8.5px;line-height:10px;color:#3b3b3b;letter-spacing:-0.283px;">Address</span>
<span class="t" style="left:320.00px;top:84px;font-size:8.5px;line-height:10px;color:#3b3b3b;letter-spacing:-0.044px;">Book</span>
<span class="t" style="left:349.30px;top:73px;font-size:8.5px;line-height:10px;color:#3b3b3b;letter-spacing:-0.139px;">Check</span>
<span class="t" style="left:348.20px;top:84px;font-size:8.5px;line-height:10px;color:#3b3b3b;letter-spacing:-0.245px;">Names</span>
<span class="t" style="left:332.40px;top:98px;font-size:8.5px;line-height:10px;color:#6a6a6a;letter-spacing:-0.705px;">Names</span>
<span class="t" style="left:385.00px;top:73px;font-size:8.5px;line-height:10px;color:#3b3b3b;letter-spacing:-0.016px;">Attach</span>
<span class="t" style="left:388.40px;top:84px;font-size:8.5px;line-height:10px;color:#3b3b3b;letter-spacing:-0.299px;">File</span>
<span class="t" style="left:415.20px;top:73px;font-size:8.5px;line-height:10px;color:#3b3b3b;letter-spacing:-0.066px;">Attach</span>
<span class="t" style="left:416.40px;top:84px;font-size:8.5px;line-height:10px;color:#3b3b3b;letter-spacing:-0.133px;">Item</span>
<span class="t" style="left:444.30px;top:73px;font-size:8.5px;line-height:10px;color:#3b3b3b;letter-spacing:-0.187px;">Signature</span>
<span class="t" style="left:418.60px;top:98px;font-size:8.5px;line-height:10px;color:#6a6a6a;letter-spacing:-0.173px;">Include</span>
<span class="t" style="left:503.80px;top:49px;font-size:8.5px;line-height:10px;color:#3b3b3b;letter-spacing:-0.110px;">Follow Up</span>
<span class="t" style="left:503.80px;top:65px;font-size:8.5px;line-height:10px;color:#3b3b3b;letter-spacing:0.102px;">High Importance</span>
<span class="t" style="left:503.80px;top:81px;font-size:8.5px;line-height:10px;color:#3b3b3b;letter-spacing:0.023px;">Low Importance</span>
<span class="t" style="left:517.00px;top:98px;font-size:8.5px;line-height:10px;color:#6a6a6a;letter-spacing:-0.914px;">Tags</span>
<span class="t" style="left:584.60px;top:73px;font-size:8.5px;line-height:10px;color:#3b3b3b;letter-spacing:-0.024px;">Office</span>
<span class="t" style="left:581.20px;top:84px;font-size:8.5px;line-height:10px;color:#3b3b3b;">Add-ins</span>
<span class="t" style="left:581.70px;top:98px;font-size:8.5px;line-height:10px;color:#6a6a6a;letter-spacing:-0.132px;">Add-ins</span>
<span class="t" style="left:9.40px;top:169px;font-size:8.6px;line-height:10px;color:#2f2f2f;letter-spacing:-0.521px;">Send</span>
<span class="t" style="left:57.60px;top:139px;font-size:8.6px;line-height:10px;color:#2f2f2f;letter-spacing:-0.041px;">To</span>
<span class="t" style="left:66.80px;top:139px;font-size:8.6px;line-height:10px;color:#2f2f2f;letter-spacing:-0.256px;">...</span>
<span class="t" style="left:58.00px;top:161px;font-size:8.6px;line-height:10px;color:#2f2f2f;letter-spacing:-0.555px;">Cc</span>
<span class="t" style="left:67.40px;top:161px;font-size:8.6px;line-height:10px;color:#2f2f2f;letter-spacing:-0.523px;">...</span>
<span class="t" style="left:46.60px;top:180px;font-size:8.6px;line-height:10px;color:#6a6a6a;letter-spacing:-0.369px;">Subject</span>
<span class="t" style="left:46.10px;top:210px;font-size:8.6px;line-height:10px;color:#6a6a6a;letter-spacing:-0.231px;">Attached</span>
<span class="t" style="left:104.80px;top:139px;font-size:7.5px;line-height:9px;color:#3a939e;letter-spacing:-0.041px;">rick_sanders@gmail.com</span>
<span class="t" style="left:95.40px;top:181px;font-size:8.4px;line-height:10px;color:#1f1f1f;letter-spacing:-0.069px;-webkit-text-stroke:0.15px #1f1f1f;">Proposal</span>
<span class="t" style="left:123.40px;top:205px;font-size:8.6px;line-height:10px;color:#2b2b2b;letter-spacing:-0.091px;">Proposal.pdf</span>
<span class="t" style="left:123.40px;top:216px;font-size:8.4px;line-height:10px;color:#6a6a6a;letter-spacing:-0.426px;">419 KB</span>
<span class="t" style="left:10.90px;top:300px;font-size:9.7px;line-height:11px;color:#2a2a2a;letter-spacing:-0.168px;">Best regards,</span>
<span class="t" style="left:62.60px;top:326px;font-size:10.0px;line-height:11px;color:#454545;letter-spacing:0.186px;">Christie Markson, Sales Manager</span>
<span class="t" style="left:62.60px;top:339px;font-size:10.0px;line-height:11px;color:#454545;letter-spacing:-0.121px;">+1 989 321 42 31</span>
<span class="t" style="left:62.60px;top:351px;font-size:10.0px;line-height:11px;color:#454545;letter-spacing:0.191px;">2165  Lakeland Terrace, Westland, Michigan</span>
<span class="t" style="left:62.60px;top:363px;font-size:10.0px;line-height:11px;color:#454545;letter-spacing:0.269px;">christie_markson@gmail.com</span>
<span class="t" style="left:205.00px;top:363px;font-size:10.0px;line-height:11px;color:#454545;letter-spacing:-0.198px;">|</span>
<span class="t" style="left:211.20px;top:363px;font-size:10.0px;line-height:11px;color:#454545;letter-spacing:0.424px;">LinkedIn</span>
<span class="t" style="left:256.20px;top:363px;font-size:10.0px;line-height:11px;color:#454545;letter-spacing:-0.198px;">|</span>
<span class="t" style="left:262.40px;top:363px;font-size:10.0px;line-height:11px;color:#454545;letter-spacing:0.160px;">Facebook</span>
<span class="t" style="left:311.30px;top:363px;font-size:10.0px;line-height:11px;color:#454545;letter-spacing:-0.198px;">|</span>
<span class="t" style="left:317.70px;top:363px;font-size:10.0px;line-height:11px;color:#454545;letter-spacing:0.579px;">Twitter</span>
<span class="t" style="left:43.60px;top:630px;font-size:7.8px;line-height:9px;color:#a8a8a8;letter-spacing:-0.186px;">Type here to search</span>
<span class="t" style="left:642.20px;top:630px;font-size:6.6px;line-height:7px;color:#f0f0f0;letter-spacing:-0.967px;">ENG</span>
<span class="t" style="left:662.80px;top:626px;font-size:6.8px;line-height:7px;color:#f4f4f4;letter-spacing:-0.475px;">2:51 PM</span>
<span class="t" style="left:657.80px;top:635px;font-size:6.8px;line-height:7px;color:#f4f4f4;letter-spacing:-0.503px;">12/07/2018</span>
</div>
</div></body></html>
